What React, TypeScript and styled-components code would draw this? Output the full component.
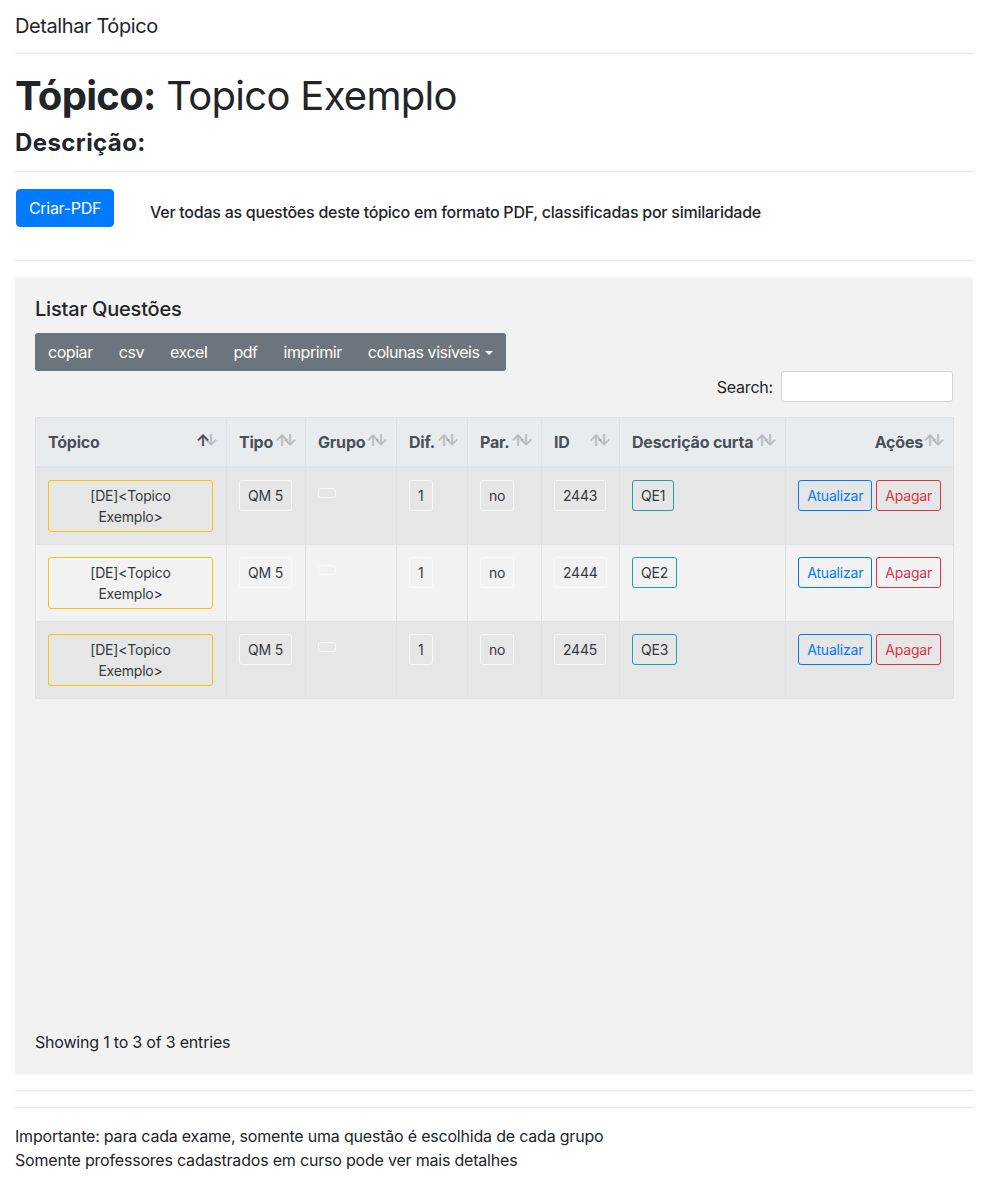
import React from "react";
import styled, { createGlobalStyle } from "styled-components";

const Global = createGlobalStyle`
  html, body { margin: 0; padding: 0; background: #fff; }
  body {
    font-family: Inter, "Noto Sans", "Liberation Sans", sans-serif;
    font-size: 16px;
    line-height: 1.5;
    color: #212529;
    letter-spacing: -0.2px;
  }
  * { box-sizing: border-box; }
`;

const Page = styled.div`
  padding: 0 17px 0 15px;
`;

const TopBar = styled.div`
  font-size: 20px;
  line-height: 24px;
  padding: 14px 0 15px;
  font-weight: 400;
  letter-spacing: -0.4px;
`;

const Rule = styled.hr<{ $mt?: number; $mb?: number }>`
  border: 0;
  border-top: 1px solid rgba(0, 0, 0, 0.1);
  margin: ${(p) => p.$mt ?? 0}px 0 ${(p) => p.$mb ?? 0}px;
`;

const Title = styled.h1`
  font-size: 40px;
  line-height: 48px;
  font-weight: 400;
  margin: 18px 0 0;
  letter-spacing: -0.7px;
  b { font-weight: 700; }
`;

const SubTitle = styled.h4`
  font-size: 24px;
  line-height: 29px;
  font-weight: 700;
  margin: 8px 0 0;
  letter-spacing: 0.4px;
`;

const PdfRow = styled.div`
  display: flex;
  align-items: center;
  gap: 36px;
  margin: 17px 0 33px;
`;

const PrimaryButton = styled.button`
  font-family: inherit;
  letter-spacing: -0.3px;
  background: #007bff;
  color: #fff;
  border: 1px solid #007bff;
  border-radius: 4px;
  font-size: 16px;
  line-height: 24px;
  padding: 6px 0;
  width: 98px;
  margin-left: 1px;
  white-space: nowrap;
`;

const PdfText = styled.span`
  font-size: 16px;
  font-weight: 500;
  color: #212529;
  letter-spacing: -0.25px;
  margin-top: 8px;
`;

const Card = styled.div`
  background: #f2f2f2;
  margin-top: 16px;
  padding: 20px;
  min-height: 797px;
  display: flex;
  flex-direction: column;
`;

const CardTitle = styled.h5`
  font-size: 20px;
  line-height: 24px;
  font-weight: 500;
  margin: 0 0 12px;
`;

const ButtonGroup = styled.div`
  display: inline-flex;
  align-self: flex-start;
  background: #6c757d;
  border-radius: 4px;
  overflow: hidden;
`;

const GroupButton = styled.button`
  font-family: inherit;
  letter-spacing: -0.45px;
  background: #6c757d;
  color: #fff;
  border: 1px solid #6c757d;
  font-size: 16px;
  line-height: 24px;
  padding: 6px 12px;
  display: inline-flex;
  align-items: center;
  gap: 5px;
`;

const Caret = styled.span`
  display: inline-block;
  width: 0;
  height: 0;
  border-top: 4.5px solid #fff;
  border-left: 4.5px solid transparent;
  border-right: 4.5px solid transparent;
  margin-top: 1px;
`;

const SearchRow = styled.div`
  display: flex;
  justify-content: flex-end;
  align-items: center;
  gap: 8px;
  margin-bottom: 15px;
`;

const SearchLabel = styled.label`
  font-size: 16px;
`;

const SearchInput = styled.input`
  width: 172px;
  height: 31px;
  border: 1px solid #ced4da;
  border-radius: 3px;
  background: #fff;
  font-family: inherit;
`;

const Table = styled.table`
  width: 918px;
  border-collapse: collapse;
  border: 1px solid #dee2e6;
  table-layout: fixed;
`;

const Th = styled.th<{ $w: number; $right?: boolean; $active?: boolean }>`
  position: relative;
  width: ${(p) => p.$w}px;
  background: #e9ecef;
  color: #495057;
  font-weight: 700;
  font-size: 16px;
  line-height: 24px;
  text-align: ${(p) => (p.$right ? "right" : "left")};
  padding: 12px 30px 12px 12px;
  border: 1px solid #dee2e6;
  border-bottom: 2px solid #dee2e6;
  white-space: nowrap;
  &::before, &::after {
    position: absolute;
    bottom: 14px;
    font-weight: 700;
    line-height: 24px;
    opacity: 0.3;
  }
  &::before {
    content: "\\2191";
    right: 16px;
    ${(p) => (p.$active ? "opacity: 1;" : "")}
  }
  &::after {
    content: "\\2193";
    right: 8px;
  }
`;

const Tr = styled.tr<{ $striped: boolean }>`
  background: ${(p) => (p.$striped ? "#e6e6e6" : "#f2f2f2")};
`;

const Td = styled.td<{ $right?: boolean }>`
  vertical-align: top;
  padding: 12px;
  height: 77px;
  border: 1px solid #dee2e6;
  text-align: ${(p) => (p.$right ? "right" : "left")};
  font-size: 14px;
  line-height: 21px;
  white-space: nowrap;
`;

const Chip = styled.span<{ $border: string; $wide?: boolean; $empty?: boolean }>`
  display: inline-block;
  border: 1px solid ${(p) => p.$border};
  color: #343a40;
  border-radius: 3px;
  padding: 4px 8px;
  height: ${(p) => (p.$empty ? "10px" : "auto")};
  margin-top: ${(p) => (p.$empty ? "8px" : "0")};
  width: ${(p) => (p.$wide ? "165px" : "auto")};
  text-align: center;
  font-size: 14px;
  line-height: 21px;
`;

const Actions = styled.div`
  display: flex;
  justify-content: flex-end;
  gap: 4px;
`;

const ActionButton = styled.button<{ $color: string }>`
  font-family: inherit;
  letter-spacing: -0.2px;
  background: transparent;
  color: ${(p) => p.$color};
  border: 1px solid ${(p) => p.$color};
  border-radius: 3px;
  font-size: 14px;
  line-height: 21px;
  padding: 4px 8px;
`;

const Info = styled.div`
  margin-top: auto;
  font-size: 16px;
  line-height: 24px;
`;

const Notes = styled.div`
  padding-top: 16px;
  font-size: 16px;
  line-height: 24px;
`;

const rows = [
  { id: "2443", qe: "QE1" },
  { id: "2444", qe: "QE2" },
  { id: "2445", qe: "QE3" },
];

export default function App() {
  return (
    <>
      <Global />
      <Page>
        <TopBar>Detalhar Tópico</TopBar>
        <Rule />
        <Title>
          <b>Tópico:</b> Topico Exemplo
        </Title>
        <SubTitle>Descrição:</SubTitle>
        <Rule $mt={14} />
        <PdfRow>
          <PrimaryButton>Criar-PDF</PrimaryButton>
          <PdfText>Ver todas as questões deste tópico em formato PDF, classificadas por similaridade</PdfText>
        </PdfRow>
        <Rule />
        <Card>
          <CardTitle>Listar Questões</CardTitle>
          <ButtonGroup>
            <GroupButton>copiar</GroupButton>
            <GroupButton>csv</GroupButton>
            <GroupButton>excel</GroupButton>
            <GroupButton>pdf</GroupButton>
            <GroupButton>imprimir</GroupButton>
            <GroupButton>
              colunas visíveis <Caret />
            </GroupButton>
          </ButtonGroup>
          <SearchRow>
            <SearchLabel>Search:</SearchLabel>
            <SearchInput type="search" />
          </SearchRow>
          <Table>
            <thead>
              <tr>
                <Th $w={191} $active>Tópico</Th>
                <Th $w={79}>Tipo</Th>
                <Th $w={91}>Grupo</Th>
                <Th $w={71}>Dif.</Th>
                <Th $w={74}>Par.</Th>
                <Th $w={78}>ID</Th>
                <Th $w={166}>Descrição curta</Th>
                <Th $w={168} $right>Ações</Th>
              </tr>
            </thead>
            <tbody>
              {rows.map((r, i) => (
                <Tr key={r.id} $striped={i % 2 === 0}>
                  <Td>
                    <Chip $border="#ffc107" $wide>
                      [DE]&lt;Topico
                      <br />
                      Exemplo&gt;
                    </Chip>
                  </Td>
                  <Td>
                    <Chip $border="#f8f9fa">QM 5</Chip>
                  </Td>
                  <Td>
                    <Chip $border="#f8f9fa" $empty />
                  </Td>
                  <Td>
                    <Chip $border="#f8f9fa">1</Chip>
                  </Td>
                  <Td>
                    <Chip $border="#f8f9fa">no</Chip>
                  </Td>
                  <Td>
                    <Chip $border="#f8f9fa">{r.id}</Chip>
                  </Td>
                  <Td>
                    <Chip $border="#17a2b8">{r.qe}</Chip>
                  </Td>
                  <Td $right>
                    <Actions>
                      <ActionButton $color="#007bff">Atualizar</ActionButton>
                      <ActionButton $color="#dc3545">Apagar</ActionButton>
                    </Actions>
                  </Td>
                </Tr>
              ))}
            </tbody>
          </Table>
          <Info>Showing 1 to 3 of 3 entries</Info>
        </Card>
        <Rule $mt={16} />
        <Rule $mt={16} />
        <Notes>
          Importante: para cada exame, somente uma questão é escolhida de cada grupo
          <br />
          Somente professores cadastrados em curso pode ver mais detalhes
        </Notes>
      </Page>
    </>
  );
}
